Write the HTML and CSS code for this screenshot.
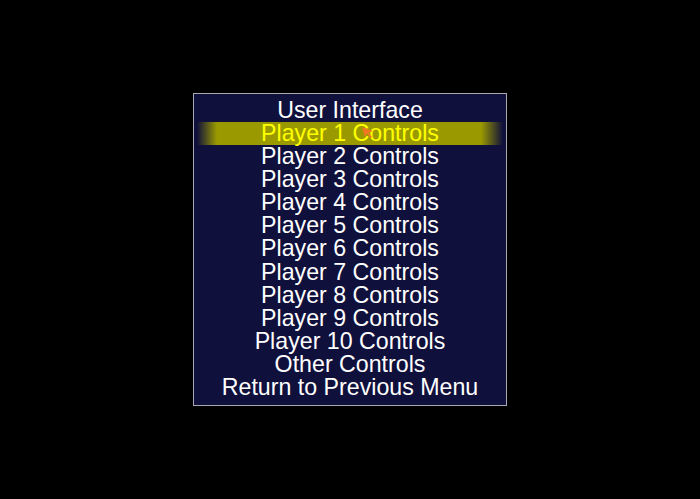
FILE: index.html
```html
<!DOCTYPE html>
<html>
<head>
<meta charset="utf-8">
<link rel="stylesheet" href="styles.css">
</head>
<body>
<div class="screen">
  <div class="menu">
    <div class="item">User Interface</div>
    <div class="item selected">Player 1 Controls
      <svg class="cursor" width="14" height="14" viewBox="0 0 14 14"><path d="M1 1 L12 5 L7.5 6.5 L11 11 L9.5 12 L6 7.5 L4 12 Z" fill="#f07820"/></svg>
    </div>
    <div class="item">Player 2 Controls</div>
    <div class="item">Player 3 Controls</div>
    <div class="item">Player 4 Controls</div>
    <div class="item">Player 5 Controls</div>
    <div class="item">Player 6 Controls</div>
    <div class="item">Player 7 Controls</div>
    <div class="item">Player 8 Controls</div>
    <div class="item">Player 9 Controls</div>
    <div class="item">Player 10 Controls</div>
    <div class="item">Other Controls</div>
    <div class="item">Return to Previous Menu</div>
  </div>
</div>
</body>
</html>
```
FILE: styles.css
```css
html, body {
  margin: 0;
  padding: 0;
  background: #000;
}
.screen {
  width: 700px;
  height: 499px;
  display: flex;
  justify-content: center;
  padding-top: 93px;
  box-sizing: border-box;
}
.menu {
  width: 312px;
  height: 306px;
  border: 1px solid #a8a8b0;
  background: #10103c;
  padding: 5px 0 0 0;
  box-sizing: content-box;
}
.item {
  position: relative;
  font-family: "Liberation Sans", Arial, sans-serif;
  font-size: 23.2px;
  line-height: 23.08px;
  height: 23.08px;
  color: #ffffff;
  text-align: center;
  white-space: nowrap;
}
.item.selected {
  color: #ffff00;
  margin: 0 3px;
  background: linear-gradient(to right, rgba(154,154,0,0) 0px, #9a9a00 20px, #9a9a00 calc(100% - 22px), rgba(154,154,0,0) 100%);
}
.cursor {
  position: absolute;
  left: 164px;
  top: 4px;
}
```
